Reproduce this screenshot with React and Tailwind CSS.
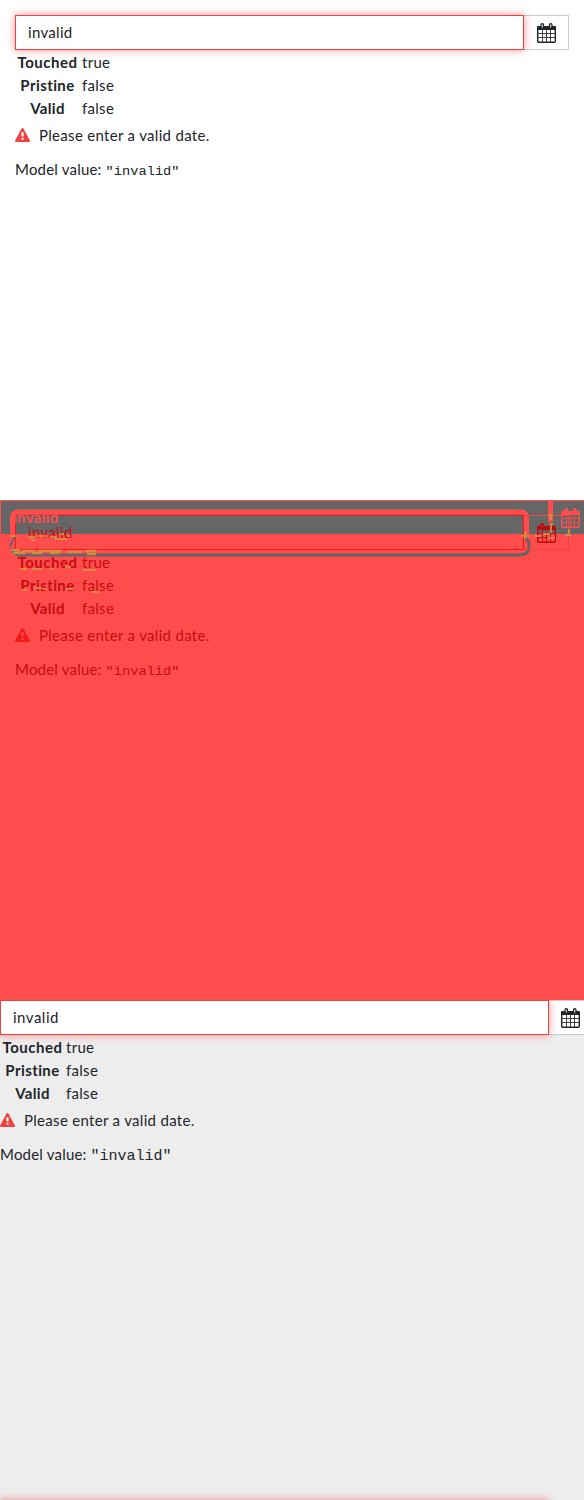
import React from 'react';

function Calendar({ className = 'text-[#212529]', rings = '#ccc' }) {
  return (
    <svg className={className} width="19" height="20" viewBox="0 0 19 20" fill="none" stroke="currentColor">
      <path d="M1 3h17q1 0 1 1v3H0V4q0-1 1-1z" fill="currentColor" stroke="none" />
      <rect x=".7" y="4" width="17.600" height="15.300" rx="1" strokeWidth="1.400" />
      <path d="M5.500 7v12M9.500 7v12M13.500 7v12M1 10.500h17M1 14.500h17" strokeWidth=".85" />
      <rect x="4" y=".6" width="2.500" height="4.600" rx="1.200" fill={rings} strokeWidth="1.200" />
      <rect x="12.500" y=".6" width="2.500" height="4.600" rx="1.200" fill={rings} strokeWidth="1.200" />
    </svg>
  );
}

function Warning({ className }) {
  return (
    <svg className={`-mt-px mr-[9px] shrink-0 ${className}`} width="15" height="14" viewBox="0 0 1792 1664" fill="currentColor">
      <path d="M1024 1375v-190q0-14-9.500-23.500t-22.500-9.500h-192q-13 0-22.500 9.500t-9.500 23.500v190q0 14 9.500 23.500t22.500 9.500h192q13 0 22.500-9.500t9.500-23.500zm-2-374l18-459q0-12-10-19-13-11-24-11h-220q-11 0-24 11-10 7-10 21l17 457q0 10 10 16.500t24 6.500h185q14 0 23.500-6.500t10.500-16.500zm-14-934l768 1408q35 63-2 126-17 29-46.500 46t-63.500 17h-1536q-34 0-63.500-17t-46.500-46q-37-63-2-126l768-1408q17-31 47-49t65-18 65 18 47 49z" />
    </svg>
  );
}

function Details({
  columns = 'grid-cols-[61px_auto] gap-x-[4px] pl-[3px]',
  warning = 'text-[#f04141]',
  code = 'text-[13.7px]',
}) {
  return (
    <>
      <div className={`grid justify-start pt-px leading-[23px] ${columns}`}>
        <b className="text-center tracking-[0.5px]">Touched</b><span>true</span>
        <b className="text-center tracking-[0.42px]">Pristine</b><span>false</span>
        <b className="text-center">Valid</b><span>false</span>
      </div>
      <div className="mt-[4px] flex h-[23px] items-center"><Warning className={warning} /><span className="tracking-[0.31px]">Please enter a valid date.</span></div>
      <div className="mt-[11px] h-[23px] whitespace-pre leading-[23px] tracking-[0.2px]">Model value: <span className={`font-['Liberation_Mono',monospace] tracking-normal ${code}`}>"invalid"</span></div>
    </>
  );
}

export default function App() {
  return (
    <main className="w-[584px] bg-white font-[Lato,sans-serif] text-[15px] tracking-[0.3px] text-[#212529]">
      <section className="h-[500px] p-[15px]">
        <div className="flex h-[35px]">
          <div className="z-10 w-[509px] border border-[#f04141] bg-white pl-[12px] leading-[32px] tracking-[0.3px] shadow-[0_0_8px_rgba(240,65,65,0.6)]">invalid</div>
          <div className="flex w-[45px] items-center justify-center border border-l-0 border-[#ccc]"><Calendar /></div>
        </div>
        <Details columns="grid-cols-[61px_auto] gap-x-[4px] pl-[2px]" />
      </section>
      <section className="relative h-[500px] overflow-hidden bg-[#ff4d4d] p-[15px] text-[#c90b10]">
        <svg className="absolute top-0 left-0" width="584" height="62" fill="none">
          <path d="M1 1h583v33H1z" fill="#666" />
          <path d="M0 .5h584M.5 0v34" stroke="#ff4d4d" />
          <path d="M550.500 0v22" stroke="#ff4d4d" strokeWidth="5" />
          <path d="M12 48q1 7 8 7h500q9 0 9-9v-4l-6-7" stroke="#666" strokeWidth="3" />
          <path d="M12.500 34V18q0-6 6-6h502q6 0 6 6v16" stroke="#ff4d4d" strokeWidth="5" />
          <path d="M10 46l5-9" stroke="#666" strokeWidth="2" />
        </svg>
        <div className="relative flex h-[35px]">
          <div className="w-[509px] border border-[#ff1515] pl-[12px] leading-[32px] tracking-[0.3px]">invalid</div>
          <div className="flex w-[45px] items-center justify-center border border-l-0 border-[#e94646]"><Calendar className="text-[#b90b10]" rings="#e02020" /></div>
        </div>
        <Details columns="grid-cols-[61px_auto] gap-x-[4px] pl-[2px]" warning="text-[#f51a1a]" />
        <span className="absolute top-[6px] left-[13px] font-bold tracking-[0.3px] text-[#ff4d4d]">invalid</span>
        <div className="absolute top-[8px] left-[561px]"><Calendar className="text-[#ff4d4d]" rings="#ff4d4d" /></div>
        <svg className="absolute top-0 left-0" width="584" height="100" fill="none" stroke="#d29a40" opacity=".8">
          <path d="M11 50h9m2 1h13m3 0h24m5 1h15m3-1h11M13 53h12m7 0h10m8 0h10m27 1h9" strokeWidth="2.500" />
          <path d="M28 37h7m3-1h8m4 1h7m3-3h4m3 2h3M31 40h4m20-1h12M10 36h7" strokeWidth="2" />
          <path d="M20 69h7m5 0h10m8 0h4m11-2h6m11 3h14M21 90h6m7-2h7m2 1h4m19 0h7m18 3h8" strokeWidth="2" />
          <path d="M521 36h8m5 0h6m3-2h7m-2 4h7m10-3h6M548 15h5m-4 9h4m-2-9v5m0 5v8m18-4v7m-44-4v7" strokeWidth="2" />
        </svg>
      </section>
      <section className="relative h-[500px] overflow-hidden bg-[#ededed]">
        <div className="flex h-[35px]">
          <div className="z-10 w-[549px] border border-[#f04141] bg-white pl-[12px] leading-[32px] tracking-[0.5px] shadow-[0_0_8px_rgba(240,65,65,0.6)]">invalid</div>
          <div className="flex w-[35px] items-center border-y border-[#ccc] bg-white pl-[12px]"><Calendar /></div>
        </div>
        <Details columns="grid-cols-[61px_auto] gap-x-[3px] pl-[2px]" code="text-[15px]" />
        <div className="absolute top-[500px] left-0 h-[35px] w-[549px] shadow-[0_0_8px_rgba(240,65,65,0.6)]" />
      </section>
    </main>
  );
}
